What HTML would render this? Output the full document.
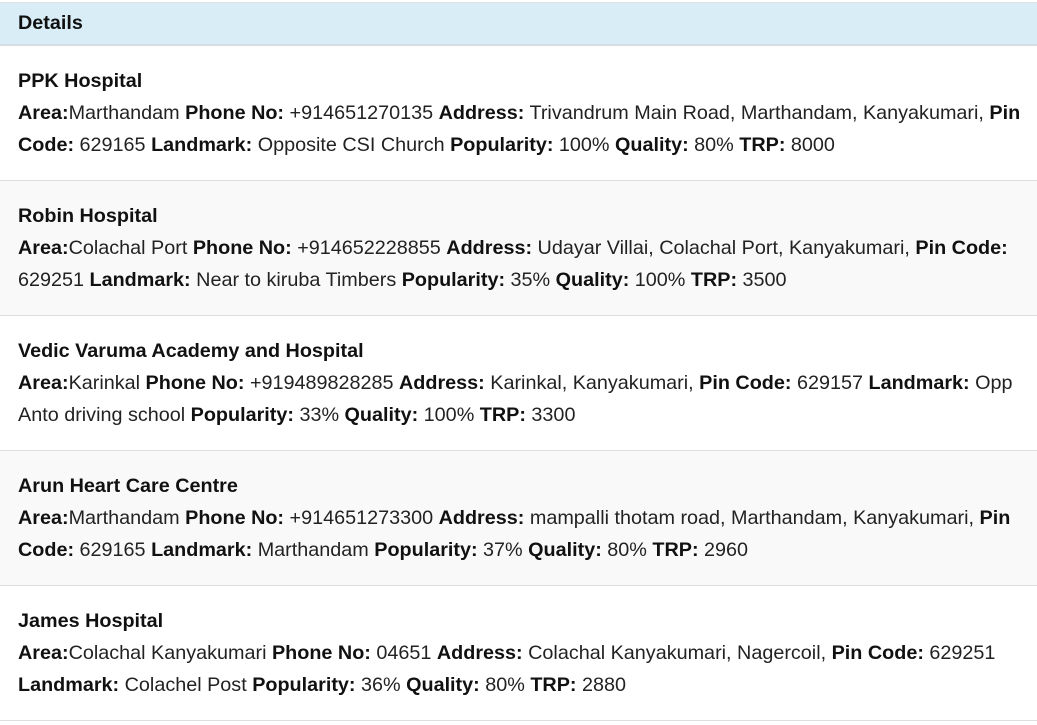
<!DOCTYPE html>
<html><head><meta charset="utf-8"><style>
body{margin:0;background:#fff;font-family:"Liberation Sans",sans-serif;font-size:19.8px;color:#222;}
.wrap{width:1037px;overflow:hidden}
.hd{margin-top:2px;height:41px;background:#d9edf7;border-top:1px solid #e3e3e3;border-bottom:2px solid #d6dde2;box-sizing:content-box;line-height:40px;padding-left:18px;font-weight:bold;color:#111}
.row{height:135px;border-bottom:1px solid #ddd;box-sizing:border-box;padding:19px 0 0 18px;line-height:32px;white-space:nowrap}
b{color:#111}
</style></head><body><div class="wrap">
<div class="hd">Details</div>
<div>
<div class="row" style="background:#fff"><b>PPK Hospital</b><br><b>Area:</b>Marthandam <b>Phone No:</b> +914651270135 <b>Address:</b> Trivandrum Main Road, Marthandam, Kanyakumari, <b>Pin</b><br><b>Code:</b> 629165 <b>Landmark:</b> Opposite CSI Church <b>Popularity:</b> 100% <b>Quality:</b> 80% <b>TRP:</b> 8000</div>
<div class="row" style="background:#f9f9f9"><b>Robin Hospital</b><br><b>Area:</b>Colachal Port <b>Phone No:</b> +914652228855 <b>Address:</b> Udayar Villai, Colachal Port, Kanyakumari, <b>Pin Code:</b><br>629251 <b>Landmark:</b> Near to kiruba Timbers <b>Popularity:</b> 35% <b>Quality:</b> 100% <b>TRP:</b> 3500</div>
<div class="row" style="background:#fff"><b>Vedic Varuma Academy and Hospital</b><br><b>Area:</b>Karinkal <b>Phone No:</b> +919489828285 <b>Address:</b> Karinkal, Kanyakumari, <b>Pin Code:</b> 629157 <b>Landmark:</b> Opp<br>Anto driving school <b>Popularity:</b> 33% <b>Quality:</b> 100% <b>TRP:</b> 3300</div>
<div class="row" style="background:#f9f9f9"><b>Arun Heart Care Centre</b><br><b>Area:</b>Marthandam <b>Phone No:</b> +914651273300 <b>Address:</b> mampalli thotam road, Marthandam, Kanyakumari, <b>Pin</b><br><b>Code:</b> 629165 <b>Landmark:</b> Marthandam <b>Popularity:</b> 37% <b>Quality:</b> 80% <b>TRP:</b> 2960</div>
<div class="row" style="background:#fff"><b>James Hospital</b><br><b>Area:</b>Colachal Kanyakumari <b>Phone No:</b> 04651 <b>Address:</b> Colachal Kanyakumari, Nagercoil, <b>Pin Code:</b> 629251<br><b>Landmark:</b> Colachel Post <b>Popularity:</b> 36% <b>Quality:</b> 80% <b>TRP:</b> 2880</div>
</div></div></body></html>
